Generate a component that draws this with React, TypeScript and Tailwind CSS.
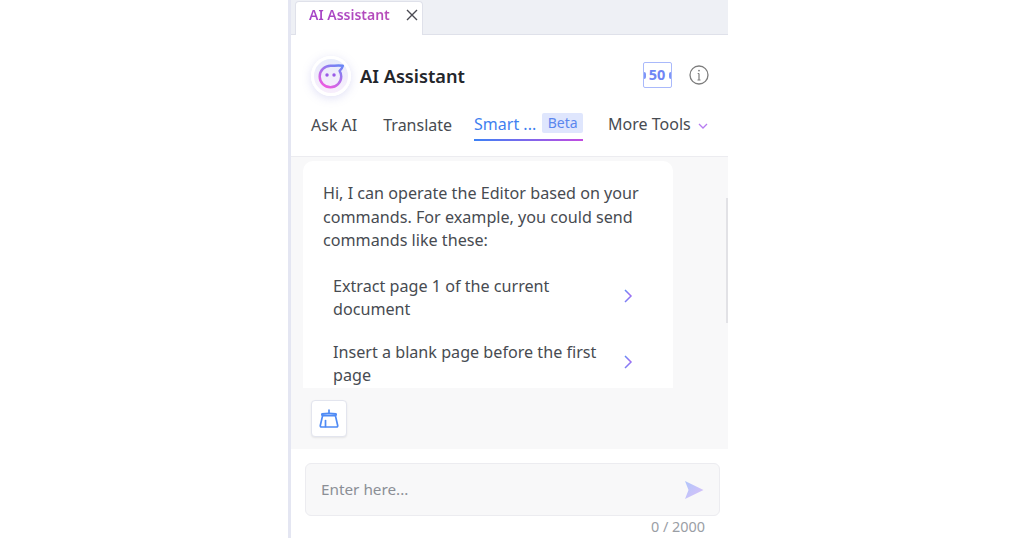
import React from "react";

const Chevron = () => (
  <svg width="10" height="16" viewBox="0 0 10 16" fill="none" className="shrink-0 -mt-[5px]">
    <defs>
      <linearGradient id="cg" x1="2" y1="2" x2="8" y2="14" gradientUnits="userSpaceOnUse">
        <stop offset="0" stopColor="#5f8ef6" />
        <stop offset="0.5" stopColor="#a56cf2" />
        <stop offset="1" stopColor="#5f8ef6" />
      </linearGradient>
    </defs>
    <path d="M2 2 L8 8 L2 14" stroke="url(#cg)" strokeWidth="1.5" />
  </svg>
);

const Suggestion = ({ lines }: { lines: string[] }) => (
  <div className="flex items-center justify-between pl-[10px] pr-[40px]">
    <div className="leading-[23.5px]">
      {lines.map((l) => (
        <div key={l} className="whitespace-nowrap">{l}</div>
      ))}
    </div>
    <Chevron />
  </div>
);

export default function App() {
  return (
    <div className="w-[1024px] h-[538px] bg-white overflow-hidden flex pl-[288px] text-[#474b51] [font-family:'Noto_Sans',sans-serif]">
      <div className="w-[440px] h-full flex flex-col border-l-[3px] border-[#e4e6f2]">
        <div className="h-[35px] shrink-0 bg-[#eef0f5] border-b border-[#dfe1ea] pl-[4px] flex items-end">
          <div className="w-[128px] h-[34px] -mb-px bg-white rounded-t-[4px] border border-b-0 border-[#dfe1ea] flex items-center pl-[13px] pr-[4px] pb-[8px] justify-between">
            <span className="text-[14px] font-semibold bg-gradient-to-r from-[#a544c8] to-[#b84cb8] bg-clip-text text-transparent">
              AI Assistant
            </span>
            <svg width="12" height="12" viewBox="0 0 12 12" fill="none">
              <path d="M1 1 L11 11 M11 1 L1 11" stroke="#4a4a52" strokeWidth="1.4" />
            </svg>
          </div>
        </div>

        <div className="h-[122px] shrink-0 border-b border-[#ececf0] flex flex-col px-[20px]">
          <div className="flex items-center justify-between h-[82px]">
            <div className="flex items-center gap-[9px]">
              <div className="w-[40px] h-[40px] rounded-full bg-gradient-to-b from-[#e8ecfb] to-[#f8eefc] border-[3px] border-white shadow-[0_2px_10px_rgba(130,130,220,0.25)] flex items-center justify-center">
                <svg width="28" height="28" viewBox="0 0 26 26" fill="none">
                  <defs>
                    <linearGradient id="lg" x1="20" y1="2" x2="8" y2="24" gradientUnits="userSpaceOnUse">
                      <stop offset="0" stopColor="#6a86f5" />
                      <stop offset="1" stopColor="#f05ae0" />
                    </linearGradient>
                  </defs>
                  <path d="M12.5 3.5 C16 3.5 20 3 24 3.5 C23.5 5.5 22.3 7 21 8.3 C22 9.8 22.5 11.5 22.5 13.5 C22.5 19 18 23.5 12.5 23.5 C7 23.5 2.5 19 2.5 13.5 C2.5 8 7 3.5 12.5 3.5 Z" stroke="url(#lg)" strokeWidth="2.3" strokeLinejoin="round" />
                  <circle cx="9.3" cy="12" r="1.6" fill="#9a5ae8" />
                  <circle cx="15.8" cy="12" r="1.6" fill="#9a5ae8" />
                </svg>
              </div>
              <span className="text-[18.2px] font-semibold text-[#23262b] mt-[2px]">AI Assistant</span>
            </div>
            <div className="flex items-center gap-[17px] -mt-[2px] -mr-[1px]">
              <div className="w-[29px] h-[26px] border border-[#a9b9fb] rounded-[2px] flex items-center justify-center pr-[1px] text-[14.5px] font-bold text-[#6f86f5] overflow-hidden relative">
                50
                <span className="absolute left-0 top-[9px] w-[2px] h-[7px] bg-[#7f96f8] rounded-r-full" />
                <span className="absolute right-0 top-[9px] w-[2px] h-[7px] bg-[#7f96f8] rounded-l-full" />
              </div>
              <svg width="20" height="20" viewBox="0 0 20 20" fill="none">
                <circle cx="10" cy="10" r="9" stroke="#7d7d7d" strokeWidth="1.3" />
                <path d="M10 8.5 V15 M8.5 15 H11.5 M8.7 8.5 H10" stroke="#7d7d7d" strokeWidth="1.2" />
                <circle cx="10" cy="5.6" r="0.9" fill="#7d7d7d" />
              </svg>
            </div>
          </div>
          <div className="flex items-start text-[16px] leading-[22px] h-[40px] whitespace-nowrap">
            <span className="shrink-0 -mt-[2px]">Ask AI</span>
            <span className="shrink-0 ml-[26px] -mt-[2px]">Translate</span>
            <div className="shrink-0 ml-[22px] w-[109px] h-[28px] relative flex items-start -mt-[3px] border-b-[2px] [border-image:linear-gradient(to_right,#3b82f6,#c34be0)_1]">
              <span className="text-[#3f7ff0]">Smart ...</span>
              <span className="ml-[6px] h-[20px] w-[41px] bg-[#dfe6fd] rounded-[2px] text-[#5b86ee] text-[14px] leading-[20px] text-center">Beta</span>
            </div>
            <span className="shrink-0 ml-[25px] -mt-[3px]">More Tools</span>
            <svg width="10" height="7" viewBox="0 0 10 7" fill="none" className="shrink-0 ml-[7px] mt-[7px]">
              <path d="M1 1 L5 5 L9 1" stroke="#b67cf0" strokeWidth="1.3" />
            </svg>
          </div>
        </div>

        <div className="h-[292px] shrink-0 bg-[#f8f8f9] flex flex-col">
          <div className="h-[231px] flex relative pt-[4px]">
            <div className="ml-[12px] w-[370px] h-[227px] bg-white rounded-t-[10px] pl-[20px] pt-[21px] text-[16.15px] overflow-hidden">
              <div className="leading-[23.5px]">
                <div>Hi, I can operate the Editor based on your</div>
                <div>commands. For example, you could send</div>
                <div>commands like these:</div>
              </div>
              <div className="mt-[22px] flex flex-col gap-[19px]">
                <Suggestion lines={["Extract page 1 of the current", "document"]} />
                <Suggestion lines={["Insert a blank page before the first", "page"]} />
              </div>
            </div>
            <div className="absolute right-0 top-[41px] w-[2px] h-[125px] bg-[#e2e2e6]" />
          </div>
          <div className="pl-[20px] pt-[12px]">
            <div className="w-[36px] h-[37px] bg-white rounded-[4px] border border-[#e3e5ee] shadow-[0_1px_2px_rgba(0,0,0,0.08)] flex items-center justify-center">
              <svg width="20" height="20" viewBox="0 0 20 20" fill="none" stroke="#4f8bf5" strokeWidth="1.7" strokeLinejoin="round" strokeLinecap="round">
                <path d="M10 1 V4.5" />
                <path d="M3 4.8 Q10 3.8 17 4.8 Q17.6 6.2 16.2 6.6 H3.8 Q2.4 6.2 3 4.8 Z" />
                <path d="M3.6 6.6 L1.3 16.5 C1.1 17.6 1.6 18 2.6 18 H17.4 C18.4 18 18.9 17.6 18.7 16.5 L16.4 6.6" />
                <path d="M6.5 11.5 V17.5" />
              </svg>
            </div>
          </div>
        </div>

        <div className="flex-1 px-[14px] pt-[14px] flex flex-col">
          <div className="h-[53px] w-[415px] bg-[#f8f8f9] border border-[#ececf0] rounded-[6px] flex items-center justify-between pl-[15px] pr-[15px]">
            <span className="text-[15.3px] text-[#8b8f96]">Enter here...</span>
            <svg width="20" height="20" viewBox="0 0 20 20">
              <defs>
                <linearGradient id="sg" x1="0" y1="0" x2="1" y2="1">
                  <stop offset="0" stopColor="#b0c6fb" />
                  <stop offset="1" stopColor="#dcc0f8" />
                </linearGradient>
              </defs>
              <path d="M1 1 L19.5 10 L1 19 L4.5 10 Z" fill="url(#sg)" />
            </svg>
          </div>
          <div className="text-right pr-[15px] text-[14.4px] leading-[22px] text-[#9a9ea5] w-[415px]">0 / 2000</div>
        </div>
      </div>
    </div>
  );
}
